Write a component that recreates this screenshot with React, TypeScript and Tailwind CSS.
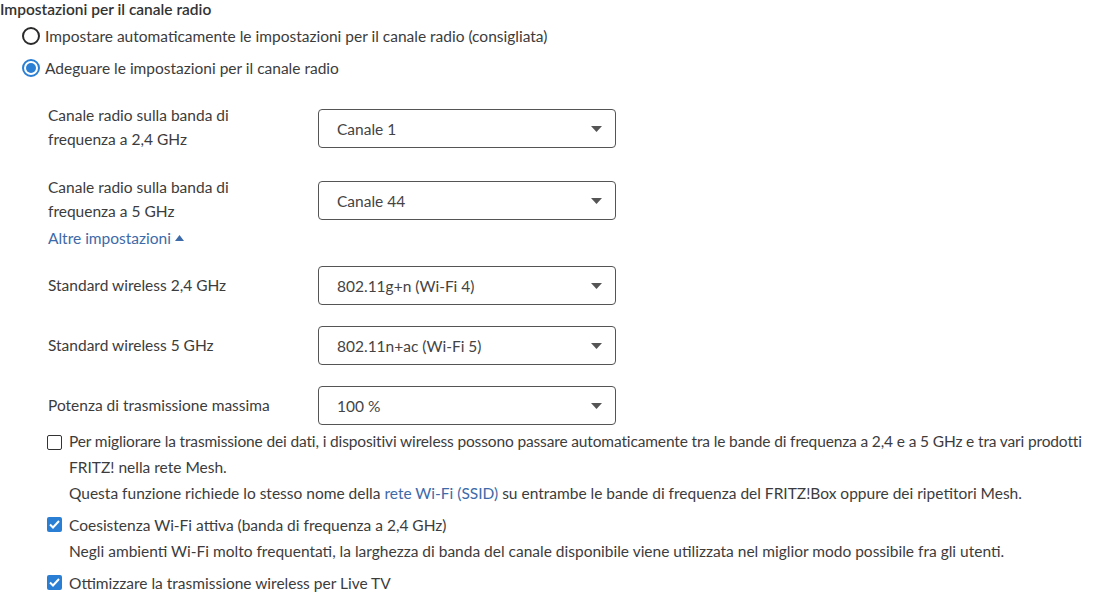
import React from 'react';

const font = { fontFamily: '"Source Sans Pro", Lato, "Liberation Sans", sans-serif' };

function Radio({ checked, label }: { checked?: boolean; label: string }) {
  return (
    <label className="flex items-center gap-[5px] h-8 pl-[22px]">
      {checked ? (
        <span className="w-[18px] h-[18px] shrink-0 rounded-full border-2 border-[#2a7fd4] flex items-center justify-center bg-white">
          <span className="w-[10px] h-[10px] rounded-full bg-[#2a7fd4]" />
        </span>
      ) : (
        <span className="w-[18px] h-[18px] shrink-0 rounded-full border-2 border-[#2b2b2b] bg-white" />
      )}
      <span>{label}</span>
    </label>
  );
}

function Select({ value }: { value: string }) {
  return (
    <div className="w-[298px] h-[39px] border border-[#555] rounded-[4px] flex items-center justify-between pl-[18px] pr-[13px] bg-white text-[#444]">
      <span>{value}</span>
      <svg width="11" height="6" viewBox="0 0 11 6">
        <path d="M0 0h11L5.5 6z" fill="#555" />
      </svg>
    </div>
  );
}

function Check({ checked }: { checked?: boolean }) {
  return checked ? (
    <span className="w-[15px] h-[15px] shrink-0 rounded-[2px] bg-[#2a7fd4] flex items-center justify-center">
      <svg width="11" height="9" viewBox="0 0 11 9">
        <path d="M1 4.5 4 7.5 10 1" stroke="#fff" strokeWidth="2" fill="none" />
      </svg>
    </span>
  ) : (
    <span className="block w-[15px] h-[15px] shrink-0 rounded-[2px] border border-[#333] bg-white" />
  );
}

export default function App() {
  return (
    <div className="w-[1097px] h-[602px] bg-white text-[#3c3c3c] text-[15.5px] leading-[24px] overflow-hidden" style={font}>
      <div className="font-semibold text-[#333] -mt-[3px]">Impostazioni per il canale radio</div>
      <div className="-mt-[1px]">
        <Radio label="Impostare automaticamente le impostazioni per il canale radio (consigliata)" />
        <Radio checked label="Adeguare le impostazioni per il canale radio" />
      </div>

      <div className="pl-[48px] mt-[19px]">
        <div className="flex items-start">
          <div className="w-[270px]">Canale radio sulla banda di<br />frequenza a 2,4 GHz</div>
          <div className="pt-[6px]"><Select value="Canale 1" /></div>
        </div>
        <div className="flex items-start mt-[24px]">
          <div className="w-[270px]">Canale radio sulla banda di<br />frequenza a 5 GHz</div>
          <div className="pt-[6px]"><Select value="Canale 44" /></div>
        </div>
        <div className="mt-[3px] flex items-center gap-[4px] text-[#3d6aa8]">
          Altre impostazioni
          <svg width="9" height="6" viewBox="0 0 9 6"><path d="M0 6 4.5 0 9 6z" fill="#3d6aa8" /></svg>
        </div>

        <div className="flex items-center mt-[16px]">
          <div className="w-[270px] -mt-[2px]">Standard wireless 2,4 GHz</div>
          <Select value="802.11g+n (Wi-Fi 4)" />
        </div>
        <div className="flex items-center mt-[21px]">
          <div className="w-[270px] -mt-[2px]">Standard wireless 5 GHz</div>
          <Select value="802.11n+ac (Wi-Fi 5)" />
        </div>
        <div className="flex items-center mt-[21px]">
          <div className="w-[270px] -mt-[2px]">Potenza di trasmissione massima</div>
          <Select value="100 %" />
        </div>
      </div>

      <div className="pl-[47px] mt-[4px]">
        <div className="flex gap-[7px]">
          <div className="pt-[6px] shrink-0"><Check /></div>
          <div className="leading-[25.5px] min-w-0">
            <div className="whitespace-nowrap tracking-[-0.14px]">
              Per migliorare la trasmissione dei dati, i dispositivi wireless possono passare automaticamente tra le bande di frequenza a 2,4 e a 5 GHz e tra vari prodotti
            </div>
            <div>FRITZ! nella rete Mesh.</div>
            <div className="mt-[1px]">
              Questa funzione richiede lo stesso nome della <span className="text-[#3d6aa8]">rete Wi-Fi (SSID)</span> su entrambe le bande di frequenza del FRITZ!Box oppure dei ripetitori Mesh.
            </div>
          </div>
        </div>
        <div className="flex gap-[7px] mt-[5px]">
          <div className="pt-[5px] shrink-0"><Check checked /></div>
          <div className="leading-[26px]">
            Coesistenza Wi-Fi attiva (banda di frequenza a 2,4 GHz)
            <div>Negli ambienti Wi-Fi molto frequentati, la larghezza di banda del canale disponibile viene utilizzata nel miglior modo possibile fra gli utenti.</div>
          </div>
        </div>
        <div className="flex gap-[7px] mt-[6px]">
          <div className="pt-[5px] shrink-0"><Check checked /></div>
          <div className="leading-[26px]">Ottimizzare la trasmissione wireless per Live TV</div>
        </div>
      </div>
    </div>
  );
}
